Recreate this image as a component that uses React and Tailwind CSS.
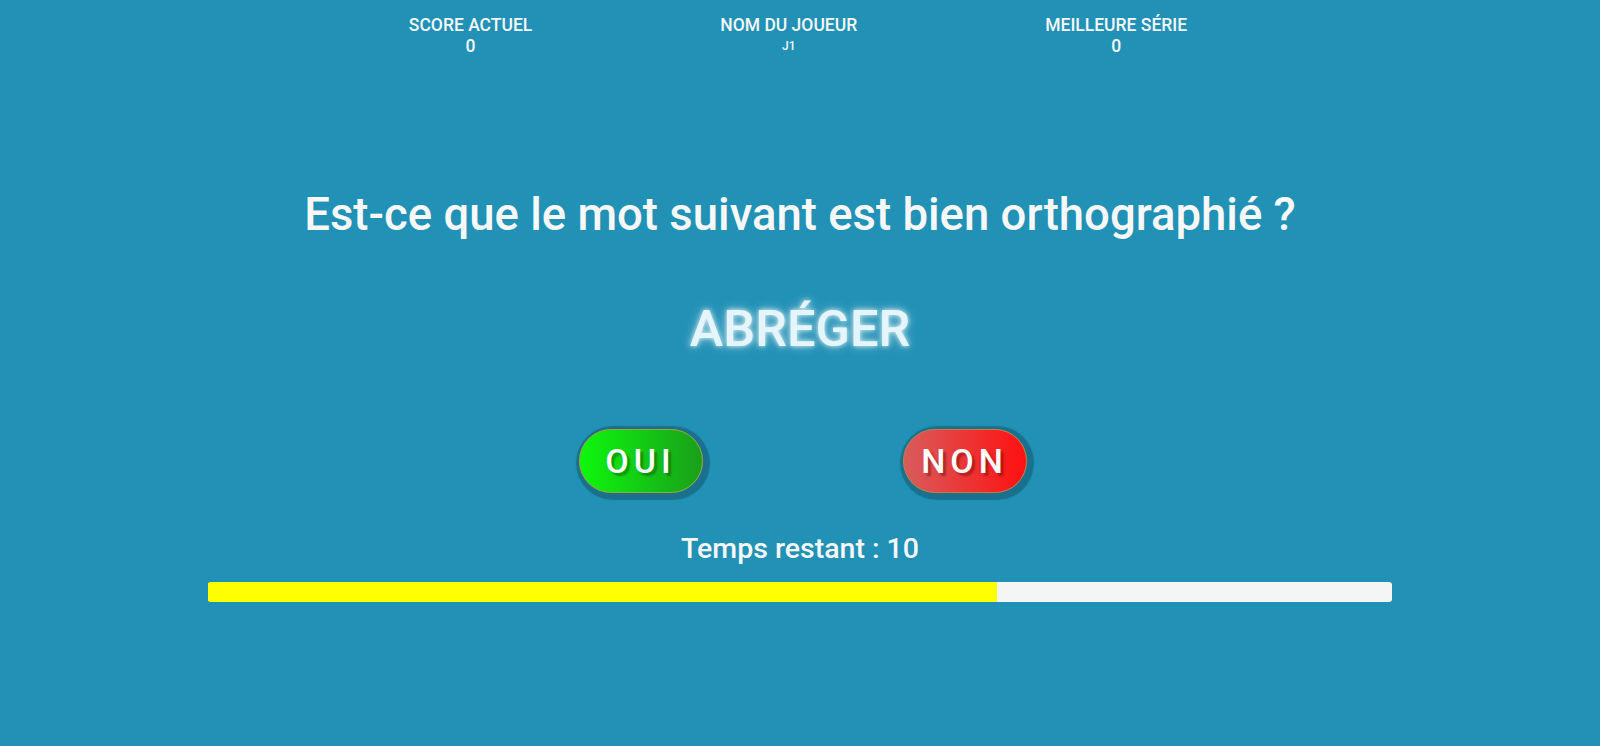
import React from "react";

function Stat({ label, value, small }) {
  return (
    <div className="flex flex-col items-center font-medium text-[17.5px] leading-[21px] text-[#f7f7f7]">
      <span>{label}</span>
      <span className={small ? "text-[12px]" : ""}>{value}</span>
    </div>
  );
}

export default function App() {
  const progress = 66.6;
  return (
    <div className="min-h-screen w-full bg-[#2191b6] font-['Roboto',sans-serif] flex flex-col items-center">
      <div className="flex justify-center gap-[188px] pt-[15px] pr-[4px]">
        <Stat label="SCORE ACTUEL" value="0" />
        <Stat label="NOM DU JOUEUR" value="J1" small />
        <Stat label="MEILLEURE SÉRIE" value="0" />
      </div>

      <h1 className="mt-[135px] text-[45.5px] leading-none font-medium text-[#f8f8f8] whitespace-nowrap">
        Est-ce que le mot suivant est bien orthographié ?
      </h1>

      <div className="mt-[66px] text-[50.5px] leading-none font-medium text-[#e4f5fb] [text-shadow:0_0_5px_rgba(255,255,255,0.85),0_0_12px_rgba(255,255,255,0.45)]">
        ABRÉGER
      </div>

      <div className="mt-[75px] flex gap-[200px] pl-[5px]">
        <button className="w-[124px] h-[64px] rounded-full border border-[#a2a52a] bg-[linear-gradient(to_right,#0ef70e,#199f1a)] shadow-[2px_2px_1px_5px_rgba(0,0,0,0.22)] flex items-center justify-center text-[34px] leading-none font-medium tracking-[5px] text-white [text-shadow:3px_3px_2px_rgba(0,60,0,0.4)]">
          OUI
        </button>
        <button className="w-[124px] h-[64px] rounded-full border border-[#cf7a3c] bg-[linear-gradient(to_right,#d95c5c,#ff1010)] shadow-[2px_2px_1px_5px_rgba(0,0,0,0.22)] flex items-center justify-center text-[34px] leading-none font-medium tracking-[5px] text-white [text-shadow:3px_3px_2px_rgba(90,0,0,0.4)]">
          NON
        </button>
      </div>

      <div className="mt-[42px] text-[28.5px] leading-none font-medium text-[#f8f8f8]">
        Temps restant : 10
      </div>

      <div className="mt-[18px] w-[1184px] h-[20px] rounded-[3px] bg-[#f5f5f5] overflow-hidden">
        <div className="h-full bg-[#ffff00]" style={{ width: `${progress}%` }} />
      </div>
    </div>
  );
}
